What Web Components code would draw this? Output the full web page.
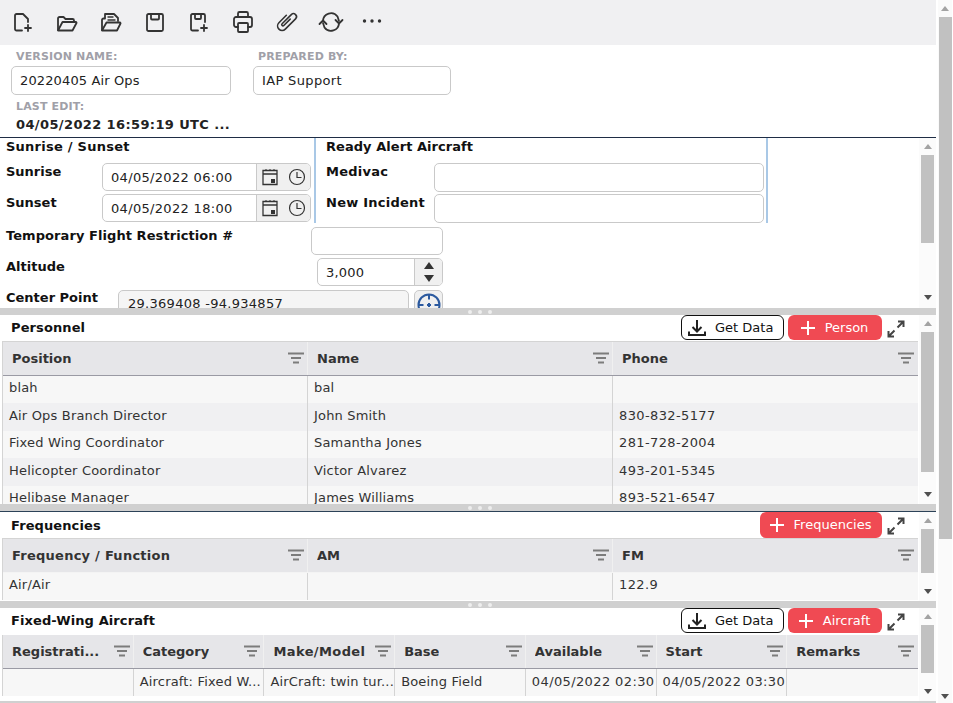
<!DOCTYPE html>
<html lang="en">
<head>
<meta charset="utf-8">
<title>IAP</title>
<style>
html,body{margin:0;padding:0;height:100%;overflow:hidden;background:#fff}
body{font:13px/16px "DejaVu Sans",Verdana,sans-serif;color:#111}
</style>
</head>
<body>
<app-shell>
  <tool-bar></tool-bar>
  <version-form></version-form>
  <app-panel height="170" thumb-top="6" thumb-height="88" down="52">
    <plan-form></plan-form>
  </app-panel>
  <app-splitter></app-splitter>
  <app-panel height="189" thumb-top="6" thumb-height="140" down="20">
    <panel-head title="Personnel" h="26"><action-button kind="get">Get Data</action-button><action-button kind="add" w="94">Person</action-button></panel-head>
    <data-table top-line columns='["Position","Name","Phone"]'
      rows='[["blah","bal",""],["Air Ops Branch Director","John Smith","830-832-5177"],["Fixed Wing Coordinator","Samantha Jones","281-728-2004"],["Helicopter Coordinator","Victor Alvarez","493-201-5345"],["Helibase Manager","James Williams","893-521-6547"]]'></data-table>
  </app-panel>
  <app-splitter dark></app-splitter>
  <app-panel height="89" thumb-top="6" thumb-height="44" down="16">
    <panel-head title="Frequencies" h="26" lh="27"><action-button kind="add" w="122" tall>Frequencies</action-button></panel-head>
    <data-table top-line light-head columns='["Frequency / Function","AM","FM"]' rows='[["Air/Air","","122.9"]]'></data-table>
  </app-panel>
  <app-splitter></app-splitter>
  <app-panel height="93" thumb-top="6" thumb-height="48" down="16">
    <panel-head title="Fixed-Wing Aircraft" h="27"><action-button kind="get">Get Data</action-button><action-button kind="add" w="94">Aircraft</action-button></panel-head>
    <data-table style="--pb:0px" columns='["Registrati...","Category","Make/Model","Base","Available","Start","Remarks"]'
      rows='[["","Aircraft: Fixed W...","AirCraft: twin tur...","Boeing Field","04/05/2022 02:30","04/05/2022 03:30",""]]'></data-table>
  </app-panel>
  <app-splitter></app-splitter>
</app-shell>

<script>
const S='fill="none" stroke="currentColor" stroke-width="1.8" stroke-linecap="round" stroke-linejoin="round"';
const svg=(w,h,body,attrs=S)=>`<svg width="${w}" height="${h}" viewBox="0 0 ${w} ${h}" ${attrs} aria-hidden="true">${body}</svg>`;
const ICON={
 fileplus:svg(24,24,'<path d="M11 21.500H5.500A1.500 1.500 0 0 1 4 20V6.500A1.500 1.500 0 0 1 5.500 5H12l5 5v3"/><path d="M17 16v6M14 19h6"/>'),
 folder:svg(24,24,'<path d="M3 21V9.500A1.500 1.500 0 0 1 4.500 8h4l2 2h7a1.500 1.500 0 0 1 1.500 1.500V13"/><path d="M3 21.500h14.500l4-7.500a.7.7 0 0 0-.6-1H7.500L3 21.500Z"/>'),
 folderdoc:svg(24,24,'<path d="M3 21V11a1.500 1.500 0 0 1 1.500-1.500H6V5h9l4 4v3"/><path d="M9 8h5M9 11h7" stroke-width="1.400"/><path d="M3 21.500h15l3.500-7a.7.7 0 0 0-.6-1H7.500L3 21.500Z"/>'),
 save:svg(24,24,'<path d="M5.500 5h13A1.500 1.500 0 0 1 20 6.500v14a1.500 1.500 0 0 1-1.500 1.500h-13A1.500 1.500 0 0 1 4 20.500v-14A1.500 1.500 0 0 1 5.500 5Z"/><path d="M8 5v4.500a1 1 0 0 0 1 1h6a1 1 0 0 0 1-1V5"/>'),
 saveplus:svg(24,24,'<path d="M11 21.500H5.500A1.500 1.500 0 0 1 4 20V6.500A1.500 1.500 0 0 1 5.500 5h11A1.500 1.500 0 0 1 18 6.500V13"/><path d="M8 5v4a1 1 0 0 0 1 1h4a1 1 0 0 0 1-1V5"/><path d="M17 16v6M14 19h6"/>'),
 print:svg(24,24,'<path d="M7 8V4.500A1.500 1.500 0 0 1 8.500 3h7A1.500 1.500 0 0 1 17 4.500V8"/><path d="M7 18H5a2 2 0 0 1-2-2v-6a2 2 0 0 1 2-2h14a2 2 0 0 1 2 2v6a2 2 0 0 1-2 2h-2"/><rect x="7" y="14" width="10" height="9" rx="1"/>'),
 clip:svg(24,24,'<path transform="translate(-1 0) rotate(45 12 13)" d="M7.500 8v10.500a4.500 4.500 0 0 0 9 0V4a3 3 0 0 0-6 0V17a1.200 1.200 0 0 0 2.400 0V8" stroke-width="1.600"/>'),
 sync:svg(26,24,'<path d="M5 12a8 8 0 0 1 14.500-4.500L21 12"/><path d="M21 14a8 8 0 0 1-14.500 4.500L5 14"/><path d="M17.500 11l3.500 3.500 3.500-3.500M1.500 15L5 11.500 8.500 15"/>'),
 dots:svg(24,24,'<circle cx="4.500" cy="12" r="1.700"/><circle cx="12" cy="12" r="1.700"/><circle cx="19.500" cy="12" r="1.700"/>','fill="currentColor"'),
 filter:svg(16,12,'<path d="M0 1.500h16M3 6h10M5 10.500h6"/>','fill="none" stroke="#7c7c7c" stroke-width="2.200"'),
 expand:svg(18,18,'<path d="M11 1.500h5.500V7M16.500 1.500L10.500 7.500M1.500 11v5.500H7M1.500 16.500L7.500 10.500"/>','fill="none" stroke="#444" stroke-width="2"'),
 download:svg(18,18,'<path d="M9 1v11M4.500 8L9 12.500 13.500 8"/><path d="M1 12.500V16h16v-3.500"/>','fill="none" stroke="#222" stroke-width="2"'),
 plus:svg(14,14,'<path d="M7 0v14M0 7h14"/>','fill="none" stroke="#fff" stroke-width="2"'),
 cal:svg(16,18,'<path d="M1 2.500h14v14H1zM1 6h14"/><path d="M4 1v2M8 1v2M12 1v2" stroke-width="1"/><rect x="9" y="11" width="4" height="4" fill="#333" stroke="none"/>','fill="none" stroke="#333" stroke-width="1.300"'),
 clock:svg(18,18,'<circle cx="9" cy="9" r="7.500"/><path d="M9 4v5.500h4.500"/>','fill="none" stroke="#333" stroke-width="1.200"'),
 cross:svg(24,24,'<circle cx="12" cy="12" r="10.500"/><path d="M12 1.500v5M12 17.500v5M1.500 12h5M17.500 12h5M10 12h4M12 10v4"/>','fill="none" stroke="#2c5a9f" stroke-width="2"')
};
function def(name,css,html,setup){
  customElements.define(name,class extends HTMLElement{
    constructor(){super();this.attachShadow({mode:'open'});}
    connectedCallback(){
      const a=n=>this.getAttribute(n);
      this.shadowRoot.innerHTML=`<style>${css}</style>`+(typeof html==='function'?html(a,this):html);
      if(setup)setup(this,a);
    }
  });
}
def('app-shell',`
 :host{display:flex;width:953px;height:703px;overflow:hidden;background:#fff}
 .main{width:936px;display:flex;flex-direction:column;height:703px;overflow:hidden;flex:none}
 .rail{flex:none;width:14px;margin-left:2px}
`,`<div class="main"><slot></slot></div><v-scroll class="rail" thumb-top="6" thumb-height="522" down="155" wide></v-scroll>`);
def('v-scroll',`
 :host{display:flex;flex-direction:column;align-items:center;width:17px;flex:none;background:#fbfbfb;overflow:hidden}
 .t{width:0;height:0;border-left:4px solid transparent;border-right:4px solid transparent;flex:none}
 .u{border-bottom:5px solid #a3a3a3;margin-top:6px}
 .d{border-top:5px solid #505050}
 .th{width:13px;background:#c1c1c1;flex:none}
 :host([wide]){background:#fafafa}
`,a=>`<i class="t u"></i><div class="th" style="margin-top:${a('thumb-top')}px;height:${a('thumb-height')}px"></div><i class="t d" style="margin-top:${a('down')}px"></i>`);
def('tool-bar',`
 :host{display:flex;align-items:flex-start;height:45px;box-sizing:border-box;padding:9px 0 0 1px;background:#f0f0f2;color:#333;flex:none}
 span{display:flex;width:44px;justify-content:center;flex:none}
 svg{display:block}
 .l{margin-left:-3px}
`,`<span>${ICON.fileplus}</span><span>${ICON.folder}</span><span>${ICON.folderdoc}</span><span>${ICON.save}</span><span>${ICON.saveplus}</span><span>${ICON.print}</span><span>${ICON.clip}</span><span>${ICON.sync}</span><span class="l">${ICON.dots}</span>`);
def('text-field',`
 :host{display:flex;box-sizing:border-box;border:1px solid #c9c9c9;border-radius:5px;background:#fff;color:#222;overflow:hidden;flex:none;font-size:13px}
 :host([ro]){background:#f5f5f5}
 .v{flex:1;padding:var(--n,0px) 8px 0;display:flex;align-items:center;white-space:nowrap;min-width:0}
 .a{display:flex;align-items:center;flex:none;background:#f0f0f0;border-left:1px solid #c9c9c9}
`,(a,el)=>`<div class="v">${a('value')||''}</div>${el.childElementCount?'<div class="a"><slot></slot></div>':''}`);
def('version-form',`
 :host{display:block;height:93px;box-sizing:border-box;flex:none;padding-top:4px;border-bottom:1px solid #1f2d45}
 .row{display:flex;align-items:flex-start}
 .lab{font:bold 11px/16px "DejaVu Sans",Verdana,sans-serif;color:#a0a0a8;padding-left:5px;letter-spacing:.15px}
 .col{display:flex;flex-direction:column;gap:1px}
 .a{margin-left:11px}.b{margin-left:22px}
 .last{padding:4px 0 0 16px}
 .last .lab{padding:0}
 .val{font-weight:bold;color:#222;margin-top:2px;white-space:nowrap;letter-spacing:.38px}
 text-field{height:29px}
`,`<div class="row"><div class="col a"><div class="lab">VERSION NAME:</div><text-field value="20220405 Air Ops" style="width:220px;letter-spacing:.13px"></text-field></div><div class="col b"><div class="lab">PREPARED BY:</div><text-field value="IAP Support" style="width:198px;letter-spacing:.35px"></text-field></div></div>
<div class="last"><div class="lab">LAST EDIT:</div><div class="val">04/05/2022 16:59:19 UTC ...</div></div>`);
const addon=`<span style="display:flex;align-items:center;gap:10px;padding:0 4px 0 5px;height:100%">${ICON.cal}${ICON.clock}</span>`;
const tri=(side)=>`<i style="width:0;height:0;border-left:5px solid transparent;border-right:5px solid transparent;border-${side}:7px solid #333"></i>`;
def('plan-form',`
 :host{display:block;font-size:13px}
 b{font-weight:bold;color:#111;white-space:nowrap;display:block;padding-top:1px}
 .top{display:flex;align-items:stretch;height:85px}
 .g{box-sizing:border-box;border-right:2px solid #a9c8e6;display:flex;flex-direction:column}
 .g1{width:316px;padding-left:6px}
 .g2{width:452px;padding-left:10px}
 .h{height:16px;margin-bottom:9px;box-sizing:border-box}
 .r{display:flex;justify-content:space-between;align-items:flex-start;margin-bottom:3px}
 .g1 .r{width:305px}
 .g2 .r{width:438px}
 .low{width:443px;box-sizing:border-box;padding:4px 0 0 6px;display:flex;flex-direction:column;gap:3px}
 .low .r{margin:0}
 svg{display:block}
 .cp{display:flex;gap:5px;align-items:flex-start}
 .crossbtn{box-sizing:border-box;width:29px;height:28px;border:1px solid #c9c9c9;border-radius:5px;background:#f0f0f0;display:flex;justify-content:center;padding-top:2px}
`,`<div class="top">
  <div class="g g1"><b class="h" style="letter-spacing:.25px">Sunrise / Sunset</b>
    <div class="r"><b>Sunrise</b><text-field value="04/05/2022 06:00" style="width:209px;height:28px;letter-spacing:.32px;--n:1px">${addon}</text-field></div>
    <div class="r"><b>Sunset</b><text-field value="04/05/2022 18:00" style="width:209px;height:28px;letter-spacing:.32px;--n:1px">${addon}</text-field></div>
  </div>
  <div class="g g2"><b class="h" style="letter-spacing:.05px">Ready Alert Aircraft</b>
    <div class="r"><b style="letter-spacing:.25px">Medivac</b><text-field style="width:330px;height:29px"></text-field></div>
    <div class="r" style="margin-top:-1px"><b style="letter-spacing:.25px">New Incident</b><text-field style="width:330px;height:29px"></text-field></div>
  </div>
</div>
<div class="low">
  <div class="r"><b style="letter-spacing:.07px">Temporary Flight Restriction #</b><text-field style="width:132px;height:28px"></text-field></div>
  <div class="r"><b>Altitude</b><text-field value="3,000" style="width:126px;height:28px;letter-spacing:.2px;--n:1px"><span style="display:flex;flex-direction:column;align-items:center;justify-content:center;gap:6px;width:27px;height:100%">${tri('bottom')}${tri('top')}</span></text-field></div>
  <div class="r" style="margin-top:1px"><b style="padding-top:0">Center Point</b><div class="cp"><text-field ro value="<span style='padding-left:1px'>29.369408 -94.934857</span>" style="width:291px;height:28px;letter-spacing:.28px"></text-field><div class="crossbtn">${ICON.cross}</div></div></div>
</div>`);
def('app-panel',`
 :host{display:flex;flex:none;overflow:hidden;width:936px}
 .c{flex:none;width:919px;overflow:hidden;display:flex;flex-direction:column;background:#fff}
`,a=>`<div class="c"><slot></slot></div><v-scroll thumb-top="${a('thumb-top')}" thumb-height="${a('thumb-height')}" down="${a('down')}"></v-scroll>`,
 (el,a)=>{el.style.height=a('height')+'px';});
def('app-splitter',`
 :host{display:flex;flex:none;height:7px;width:936px;background:#d0d0d0;justify-content:center;align-items:center;gap:6px;box-sizing:content-box;padding-left:0}
 i{width:4px;height:4px;border-radius:50%;background:#eee;display:block;position:relative;left:12px}
 :host([dark]){border-bottom:1px solid #2c4258}
`,`<i></i><i></i><i></i>`);
def('panel-head',`
 :host{display:flex;align-items:flex-start;flex:none;height:27px;padding-left:11px;padding-right:14px;box-sizing:border-box;gap:4px}
 .t{font-weight:bold;color:#111;margin-right:auto;line-height:25px;white-space:nowrap;letter-spacing:.1px}
 .x{display:block;margin:5px 0 0 1px;height:18px}
`,(a)=>`<div class="t" style="line-height:${a('lh')||25}px">${a('title')}</div><slot></slot><span class="x">${ICON.expand}</span>`,
 (el,a)=>{if(a('h'))el.style.height=a('h')+'px';});
def('action-button',`
 :host{display:flex;align-items:center;box-sizing:border-box;height:25px;border-radius:6px;white-space:nowrap;flex:none;font-size:13px}
 :host([kind=get]){width:103px;border:1px solid #111;background:#fff;color:#111;padding-left:6px;gap:9px}
 :host([kind=add]){background:#f04a53;color:#fff;justify-content:center;gap:10px;padding-right:1px}
 :host([tall]){height:26px}
 svg{display:block;flex:none}
`,(a)=>`${a('kind')==='get'?ICON.download:ICON.plus}<slot></slot>`,
 (el,a)=>{if(a('w'))el.style.width=a('w')+'px';});
const HEADSP={'Frequency / Function':'.25px','Make/Model':'.4px'};
const cellsp=c=>/^\d/.test(c)?'.38px':'.18px';
def('data-table',`
 :host{display:block;flex:none;margin-left:2px;width:916px;border-left:1px solid #d4d4d4;box-sizing:border-box}
 .row{display:grid;grid-template-columns:var(--cols)}
 .row>div{box-sizing:border-box;border-right:1px solid #d4d4d4;min-width:0;overflow:hidden;white-space:nowrap;display:flex;align-items:center}
 .row>div:last-child{border-right:0}
 .head{background:#e6e6e9;font-weight:bold;color:#333;border-bottom:1px solid #9a9aa4;height:33px}
 .head>div{padding:0 3px 0 9px;justify-content:space-between;gap:4px;border-right-color:#f0f0f0}
 .head>div:last-child{padding-right:4px}
 .head span{overflow:hidden}
 .head svg{display:block;flex:none;margin-top:-1px}
 :host([light-head]) .head{border-bottom-color:#f4f4f4}
 :host([top-line]){border-top:1px solid #d4d4d4}
 .bodywrap{margin-top:-.5px}
 .body{height:27.500px;color:#333}
 .body>div{padding:0 0 var(--pb,2px) 6px}
 .odd{background:#f7f7f7}.even{background:#f0f0f2}
`,(a)=>{
 const cols=JSON.parse(a('columns')),rows=JSON.parse(a('rows'));
 const head=`<div class="row head">${cols.map(c=>`<div><span style="letter-spacing:${HEADSP[c]||0}">${c}</span>${ICON.filter}</div>`).join('')}</div>`;
 const body=rows.map((r,i)=>`<div class="row body ${i%2?'even':'odd'}">${r.map(c=>`<div style="letter-spacing:${cellsp(c)}">${c}</div>`).join('')}</div>`).join('');
 return `<div style="--cols:repeat(${cols.length},1fr)">${head}<div class="bodywrap">${body}</div></div>`;
});
</script>
</body>
</html>
